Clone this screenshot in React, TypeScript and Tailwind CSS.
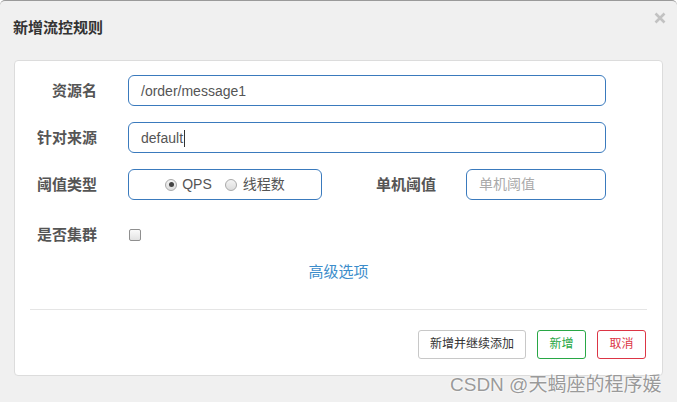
const cn = { fontFamily: '"Liberation Sans", Arial, "Noto Sans CJK SC", sans-serif' };

const Radio = ({ checked }: { checked?: boolean }) => (
  <span className="inline-flex h-[12px] w-[12px] items-center justify-center rounded-full border border-[#a9a9a9] bg-gradient-to-b from-[#f4f4f4] to-[#dcdcdc]">
    {checked && <span className="h-[5px] w-[5px] rounded-full bg-[#444]" />}
  </span>
);

const Label = ({ children }: { children: React.ReactNode }) => (
  <div className="w-[82px] shrink-0 pt-[2px] text-right text-[15px] font-bold text-[#555]">{children}</div>
);

export default function App() {
  return (
    <div style={cn} className="relative h-[402px] w-[677px] overflow-hidden rounded-t-[5px] border-t border-[#9a9a9a] bg-[#f0f0f0]">
      <div className="flex h-[59px] items-start justify-between pl-[13px] pr-[11px] pt-[16px]">
        <h4 className="text-[15px] font-bold text-[#333]">新增流控规则</h4>
        <svg width="12" height="12" viewBox="0 0 12 12" className="mt-[-5px]">
          <path d="M1.5 1.5 L10.5 10.5 M10.5 1.5 L1.5 10.5" stroke="#c2c2c2" strokeWidth="2.6" />
        </svg>
      </div>

      <div className="mx-[14px] h-[316px] rounded-[4px] border border-[#dcdcdc] bg-white pt-[14px]">
        <div className="flex h-[31px] items-center gap-[31px]">
          <Label>资源名</Label>
          <div className="flex h-[31px] w-[478px] items-center rounded-[6px] border border-[#3a7abd] px-[12px] pt-[1px] text-[14px] text-[#555]">
            /order/message1
          </div>
        </div>

        <div className="mt-[16px] flex h-[31px] items-center gap-[31px]">
          <Label>针对来源</Label>
          <div className="flex h-[31px] w-[478px] items-center rounded-[6px] border border-[#3a7abd] px-[12px] pt-[1px] text-[14px] text-[#555]">
            default<span className="ml-[1px] h-[17px] w-px bg-[#333]" />
          </div>
        </div>

        <div className="mt-[16px] flex h-[31px] items-center">
          <Label>阈值类型</Label>
          <div className="ml-[31px] flex h-[31px] w-[194px] items-center justify-center rounded-[6px] border border-[#3a7abd] text-[14px] text-[#555]">
            <Radio checked />
            <span className="ml-[5px]">QPS</span>
            <span className="ml-[13px]" />
            <Radio />
            <span className="ml-[6px]">线程数</span>
          </div>
          <div className="w-[114px] pt-[2px] text-right text-[15px] font-bold text-[#555]">单机阈值</div>
          <div className="ml-[30px] flex h-[31px] w-[140px] items-center rounded-[6px] border border-[#3a7abd] px-[12px] text-[14px] text-[#aaa]">
            单机阈值
          </div>
        </div>

        <div className="mt-[19px] flex h-[31px] items-center gap-[32px]">
          <Label>是否集群</Label>
          <span className="h-[12px] w-[12px] rounded-[2px] border border-[#8f8f8f] bg-gradient-to-b from-[#fafafa] to-[#e2e2e2]" />
        </div>

        <div className="mt-[11px] text-center text-[15px] text-[#3c8dcb]">高级选项</div>

        <div className="mx-[15px] mt-[25px] h-px bg-[#e5e5e5]" />

        <div className="mr-[16px] mt-[20px] flex justify-end gap-[11px] text-[12px]">
          <button className="h-[29px] w-[108px] rounded-[3px] border border-[#c8c8c8] bg-white text-[#333]">新增并继续添加</button>
          <button className="h-[29px] w-[49px] rounded-[3px] border border-[#28a745] bg-white text-[#28a745]">新增</button>
          <button className="h-[29px] w-[49px] rounded-[3px] border border-[#dc3545] bg-white text-[#dc3545]">取消</button>
        </div>
      </div>

      <div
        style={{ textShadow: "0 0 2px #fff, 0 0 2px #fff" }}
        className="absolute left-[450px] top-[374px] text-[19px] leading-none text-[#9a9a9a]"
      >
        CSDN @天蝎座的程序媛
      </div>
    </div>
  );
}
